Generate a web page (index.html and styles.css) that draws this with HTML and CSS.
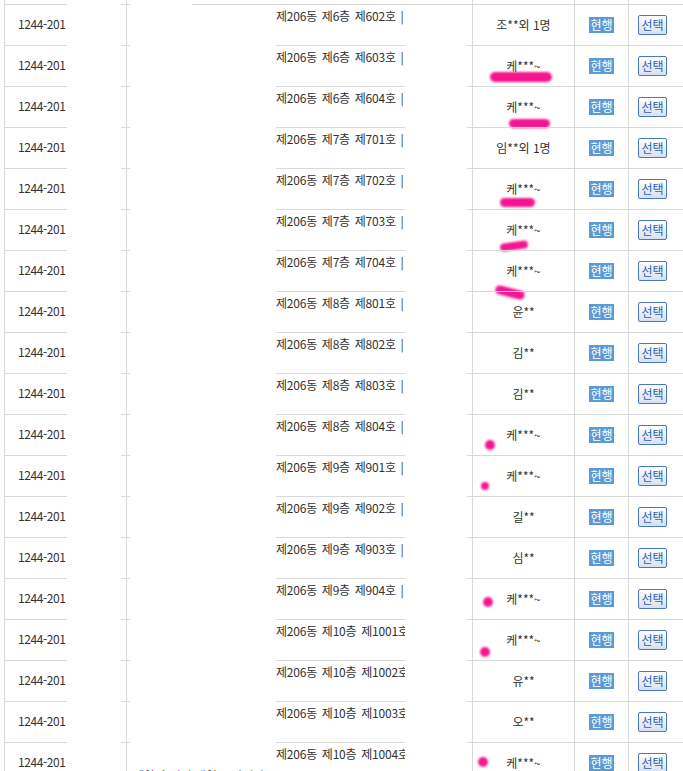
FILE: index.html
```html
<!DOCTYPE html>
<html lang="ko">
<head>
    <meta charset="UTF-8">
    <meta name="viewport" content="width=device-width, initial-scale=1.0">
    <title>호실 목록</title>
    <link rel="stylesheet" href="styles.css">
</head>
<body>

    <div class="unit-list">
        <div class="row cut">
            <div></div><div></div><div class="tick"></div><div></div><div></div><div></div>
            <div class="name"></div><div class="state"></div><div class="pick"></div>
        </div>

        <div class="row first">
            <div class="lot">1244-201</div><div></div><div class="tick"></div><div class="gap"></div>
            <div class="addr">제206동 제6층 제602호 |</div><div class="gap2"></div>
            <div class="name">조**외 1명</div>
            <div class="state"><span class="badge">현행</span></div>
            <div class="pick"><button class="btn">선택</button></div>
        </div>
        <div class="row">
            <div class="lot">1244-201</div><div></div><div class="tick"></div><div></div>
            <div class="addr">제206동 제6층 제603호 |</div><div></div>
            <div class="name">케***~<span class="mark m1"></span></div>
            <div class="state"><span class="badge">현행</span></div>
            <div class="pick"><button class="btn">선택</button></div>
        </div>
        <div class="row">
            <div class="lot">1244-201</div><div></div><div class="tick"></div><div></div>
            <div class="addr">제206동 제6층 제604호 |</div><div></div>
            <div class="name">케***~<span class="mark m2"></span></div>
            <div class="state"><span class="badge">현행</span></div>
            <div class="pick"><button class="btn">선택</button></div>
        </div>
        <div class="row">
            <div class="lot">1244-201</div><div></div><div class="tick"></div><div></div>
            <div class="addr">제206동 제7층 제701호 |</div><div></div>
            <div class="name">임**외 1명</div>
            <div class="state"><span class="badge">현행</span></div>
            <div class="pick"><button class="btn">선택</button></div>
        </div>
        <div class="row">
            <div class="lot">1244-201</div><div></div><div class="tick"></div><div></div>
            <div class="addr">제206동 제7층 제702호 |</div><div></div>
            <div class="name">케***~<span class="mark m3"></span></div>
            <div class="state"><span class="badge">현행</span></div>
            <div class="pick"><button class="btn">선택</button></div>
        </div>
        <div class="row">
            <div class="lot">1244-201</div><div></div><div class="tick"></div><div></div>
            <div class="addr">제206동 제7층 제703호 |</div><div></div>
            <div class="name">케***~<span class="mark m4"></span></div>
            <div class="state"><span class="badge">현행</span></div>
            <div class="pick"><button class="btn">선택</button></div>
        </div>
        <div class="row">
            <div class="lot">1244-201</div><div></div><div class="tick"></div><div></div>
            <div class="addr">제206동 제7층 제704호 |</div><div></div>
            <div class="name">케***~<span class="mark m5"></span></div>
            <div class="state"><span class="badge">현행</span></div>
            <div class="pick"><button class="btn">선택</button></div>
        </div>
        <div class="row">
            <div class="lot">1244-201</div><div></div><div class="tick"></div><div></div>
            <div class="addr">제206동 제8층 제801호 |</div><div></div>
            <div class="name">윤**</div>
            <div class="state"><span class="badge">현행</span></div>
            <div class="pick"><button class="btn">선택</button></div>
        </div>
        <div class="row">
            <div class="lot">1244-201</div><div></div><div class="tick"></div><div></div>
            <div class="addr">제206동 제8층 제802호 |</div><div></div>
            <div class="name">김**</div>
            <div class="state"><span class="badge">현행</span></div>
            <div class="pick"><button class="btn">선택</button></div>
        </div>
        <div class="row">
            <div class="lot">1244-201</div><div></div><div class="tick"></div><div></div>
            <div class="addr">제206동 제8층 제803호 |</div><div></div>
            <div class="name">김**</div>
            <div class="state"><span class="badge">현행</span></div>
            <div class="pick"><button class="btn">선택</button></div>
        </div>
        <div class="row">
            <div class="lot">1244-201</div><div></div><div class="tick"></div><div></div>
            <div class="addr">제206동 제8층 제804호 |</div><div></div>
            <div class="name">케***~<span class="dot d1"></span></div>
            <div class="state"><span class="badge">현행</span></div>
            <div class="pick"><button class="btn">선택</button></div>
        </div>
        <div class="row">
            <div class="lot">1244-201</div><div></div><div class="tick"></div><div></div>
            <div class="addr">제206동 제9층 제901호 |</div><div></div>
            <div class="name">케***~<span class="dot d2"></span></div>
            <div class="state"><span class="badge">현행</span></div>
            <div class="pick"><button class="btn">선택</button></div>
        </div>
        <div class="row">
            <div class="lot">1244-201</div><div></div><div class="tick"></div><div></div>
            <div class="addr">제206동 제9층 제902호 |</div><div></div>
            <div class="name">길**</div>
            <div class="state"><span class="badge">현행</span></div>
            <div class="pick"><button class="btn">선택</button></div>
        </div>
        <div class="row">
            <div class="lot">1244-201</div><div></div><div class="tick"></div><div></div>
            <div class="addr">제206동 제9층 제903호 |</div><div></div>
            <div class="name">심**</div>
            <div class="state"><span class="badge">현행</span></div>
            <div class="pick"><button class="btn">선택</button></div>
        </div>
        <div class="row">
            <div class="lot">1244-201</div><div></div><div class="tick"></div><div></div>
            <div class="addr">제206동 제9층 제904호 |</div><div></div>
            <div class="name">케***~<span class="dot d3"></span></div>
            <div class="state"><span class="badge">현행</span></div>
            <div class="pick"><button class="btn">선택</button></div>
        </div>
        <div class="row">
            <div class="lot">1244-201</div><div></div><div class="tick"></div><div></div>
            <div class="addr">제206동 제10층 제1001호 |</div><div></div>
            <div class="name">케***~<span class="dot d4"></span></div>
            <div class="state"><span class="badge">현행</span></div>
            <div class="pick"><button class="btn">선택</button></div>
        </div>
        <div class="row">
            <div class="lot">1244-201</div><div></div><div class="tick"></div><div></div>
            <div class="addr">제206동 제10층 제1002호 |</div><div></div>
            <div class="name">유**</div>
            <div class="state"><span class="badge">현행</span></div>
            <div class="pick"><button class="btn">선택</button></div>
        </div>
        <div class="row">
            <div class="lot">1244-201</div><div></div><div class="tick"></div><div></div>
            <div class="addr">제206동 제10층 제1003호 |</div><div></div>
            <div class="name">오**</div>
            <div class="state"><span class="badge">현행</span></div>
            <div class="pick"><button class="btn">선택</button></div>
        </div>
        <div class="row">
            <div class="lot">1244-201</div><div></div><div class="tick"></div>
            <div class="note">계약자 변경 내역은 관리사무소 문의</div>
            <div class="addr">제206동 제10층 제1004호 |</div><div></div>
            <div class="name">케***~<span class="dot d5"></span></div>
            <div class="state"><span class="badge">현행</span></div>
            <div class="pick"><button class="btn">선택</button></div>
        </div>
    </div>

</body>
</html>
```

FILE: styles.css
```css
html, body {
    overflow: hidden;
}
body {
    margin: 0;
    padding: 0;
    background: #fff;
    color: #333;
    font-family: "Noto Sans CJK KR", "DejaVu Sans", sans-serif;
    font-size: 12px;
}
.unit-list {
    margin-left: 4px;
    border-left: 1px solid #d9d9d9;
}
.row {
    display: grid;
    grid-template-columns: 62px 54px 9px 146px 129px 62px 107px 54px 1fr;
    height: 41px;
}
.row > div {
    box-sizing: border-box;
}
.row.cut {
    height: 4px;
}
.lot, .tick, .addr, .name, .state, .pick {
    border-top: 1px solid #d9d9d9;
}
.cut > div {
    border-top: none !important;
}
.lot {
    display: flex;
    align-items: center;
    padding: 0 0 3px 13px;
    letter-spacing: -0.4px;
}
.tick {
    background: linear-gradient(to right, transparent 5px, #d9d9d9 5px, #d9d9d9 6px, transparent 6px);
}
.first .gap {
    background: linear-gradient(#d9d9d9, #d9d9d9) no-repeat right top / 84px 1px;
}
.first .gap2 {
    border-top: 1px solid #d9d9d9;
}
.addr {
    padding-top: 2px;
    white-space: nowrap;
    overflow: hidden;
    letter-spacing: -0.2px;
    word-spacing: 1.6px;
}
.name {
    position: relative;
    display: flex;
    align-items: center;
    justify-content: center;
    padding: 0 0 2px 6px;
    background: linear-gradient(to right, transparent 5px, #d9d9d9 5px, #d9d9d9 6px, transparent 6px);
}
.state {
    display: flex;
    align-items: center;
    justify-content: center;
    border-left: 1px solid #d9d9d9;
}
.pick {
    display: flex;
    align-items: center;
    padding-left: 9px;
    border-left: 1px solid #d9d9d9;
}
.badge {
    display: inline-block;
    background-color: #5b9bd5;
    color: #fff;
    padding: 0 1px;
    height: 16px;
    line-height: 16px;
    font-size: 12px;
}
.btn {
    width: 29px;
    height: 20px;
    padding: 0;
    border: 1px solid #4a78c0;
    border-radius: 2px;
    background: linear-gradient(#ffffff, #d6e1f2);
    color: #2d5fae;
    font-family: "Noto Sans CJK KR", sans-serif;
    font-size: 12px;
    line-height: 18px;
    cursor: pointer;
}
.note {
    padding: 25px 0 0 3px;
    white-space: nowrap;
    overflow: hidden;
}

/* 개인정보 가림 표시 */
.mark, .dot {
    position: absolute;
    background: #f5168f;
    border-radius: 6px;
    filter: blur(1.2px);
}
.m1 { left: 23px; top: 26px; width: 62px; height: 10px; }
.m2 { left: 42px; top: 32px; width: 41px; height: 9px; }
.m3 { left: 33px; top: 29px; width: 35px; height: 9px; }
.m4 { left: 33px; top: 32px; width: 28px; height: 8px; transform: rotate(-8deg); }
.m5 { left: 28px; top: 37px; width: 30px; height: 9px; transform: rotate(14deg); }
.dot { width: 10px; height: 10px; border-radius: 50%; }
.d1 { left: 18px; top: 25px; }
.d2 { left: 14px; top: 26px; width: 8px; height: 8px; }
.d3 { left: 16px; top: 18px; }
.d4 { left: 13px; top: 27px; }
.d5 { left: 11px; top: 14px; }
```
